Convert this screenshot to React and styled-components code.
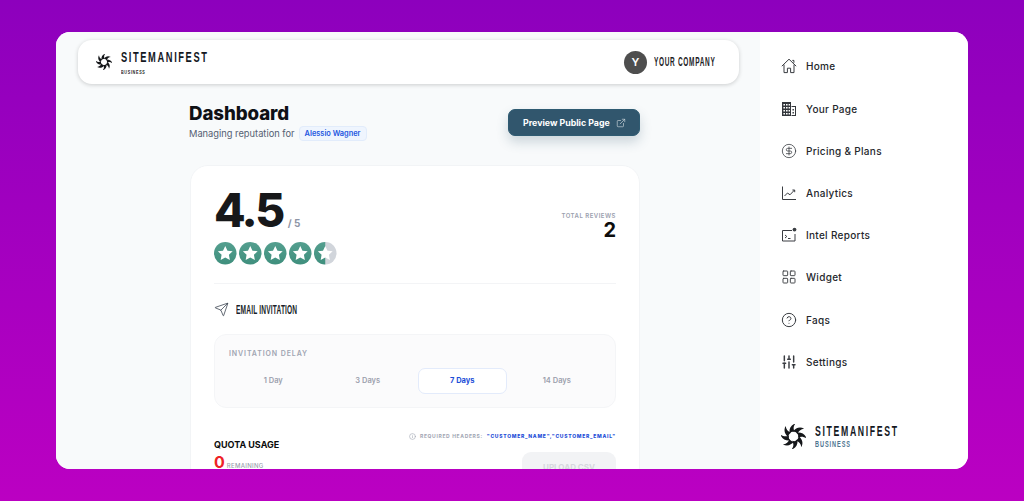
import styled, { createGlobalStyle } from 'styled-components'
import { CircleDollarSign, LayoutGrid, CircleHelp, Send, ExternalLink, SlidersVertical, Info } from 'lucide-react'

const GlobalStyle = createGlobalStyle`
    html, body { margin: 0; padding: 0; height: 100%; }
    body { font-family: Inter, "Open Sans", sans-serif; overflow: hidden; }
    #root { height: 100%; }
`

const Page = styled.div`
    height: 501px;
    padding: 32px 56px;
    box-sizing: border-box;
    background: linear-gradient(180deg, #8d00bd 0%, #bb00c2 100%);
`

const Frame = styled.div`
    display: flex;
    height: 437px;
    border-radius: 14px;
    overflow: hidden;
    background: #fff;
`

const Main = styled.div`
    width: 704px;
    flex: none;
    padding: 8px 21px 0 22px;
    box-sizing: border-box;
    background: #f8fafb;
`

const Header = styled.header`
    display: flex;
    align-items: center;
    justify-content: space-between;
    height: 44px;
    padding: 0 24px 0 18px;
    background: #fff;
    border-radius: 14px;
    box-shadow: 0 1px 4px rgba(0, 0, 0, 0.18);
`

const Brand = styled.div`
    display: flex;
    align-items: center;
    gap: ${(p) => p.$gap}px;
`

const BrandText = styled.div`
    display: flex;
    flex-direction: column;
    padding-top: ${(p) => p.$top}px;
`

// no narrow display font is installed, so the wordmarks are squeezed horizontally
const Squeezed = styled.span`
    display: block;
    width: ${(p) => p.$width}px;
    font-family: "Liberation Sans", Arial, sans-serif;
    font-weight: 700;
    white-space: nowrap;
    transform: scaleX(${(p) => p.$scale || 0.62});
    transform-origin: left center;
`

const BrandName = styled(Squeezed)`
    font-size: ${(p) => p.$size}px;
    line-height: 15px;
    letter-spacing: ${(p) => p.$spacing}px;
    color: #14181f;
`

const BrandSub = styled(Squeezed)`
    font-size: ${(p) => p.$size}px;
    line-height: 10px;
    letter-spacing: ${(p) => p.$spacing}px;
    color: ${(p) => p.$color};
    margin-top: ${(p) => p.$top}px;
`

const Company = styled.div`
    display: flex;
    align-items: center;
    gap: 7px;
`

const Avatar = styled.div`
    width: 23px;
    height: 23px;
    border-radius: 50%;
    background: #4e4e4e;
    color: #fff;
    font-size: 11px;
    font-weight: 600;
    display: flex;
    align-items: center;
    justify-content: center;
`

const CompanyName = styled(Squeezed)`
    font-size: 12.5px;
    letter-spacing: 1.3px;
    color: #1d1d1f;
`

const Content = styled.div`
    width: 450px;
    margin: 18px 0 0 112px;
`

const TitleRow = styled.div`
    display: flex;
    justify-content: space-between;
    align-items: flex-start;
    height: 63px;
`

const Title = styled.h1`
    margin: 0 0 0 -1px;
    font-size: 18.7px;
    line-height: 24px;
    font-weight: 800;
    letter-spacing: -0.1px;
    color: #0f1115;
`

const Subtitle = styled.div`
    display: flex;
    align-items: center;
    gap: 4px;
    margin-left: -1px;
    font-size: 9.3px;
    color: #556072;
`

const NameTag = styled.span`
    padding: 2px 5px;
    font-size: 7.4px;
    font-weight: 600;
    color: #2257e0;
    background: #eff5fe;
    border: 1px solid #e2ecfb;
    border-radius: 4px;
`

const PreviewButton = styled.button`
    display: flex;
    align-items: center;
    gap: 6px;
    height: 27px;
    width: 132px;
    margin-top: 7px;
    padding: 0 14px;
    box-sizing: border-box;
    border: 1px solid #2f5b72;
    border-radius: 7px;
    background: #31566d;
    color: #fff;
    font-family: inherit;
    font-size: 8.8px;
    font-weight: 700;
    white-space: nowrap;
    box-shadow: 0 6px 12px rgba(49, 86, 109, 0.22);

    svg {
        flex: none;
        opacity: 0.75;
    }
`

const Card = styled.section`
    padding: 16px 23px 0;
    height: 320px;
    background: #fff;
    border: 1px solid #f2f4f6;
    border-radius: 18px;
    box-sizing: border-box;
`

const ScoreRow = styled.div`
    display: flex;
    justify-content: space-between;
    padding-bottom: 18px;
    border-bottom: 1px solid #f3f4f6;
`

const ScoreLine = styled.div`
    display: flex;
    align-items: baseline;
    gap: 5px;
`

const Score = styled.span`
    font-size: 46px;
    line-height: 56px;
    font-weight: 800;
    letter-spacing: -2.5px;
    color: #17181a;
`

const ScoreMax = styled.span`
    font-size: 10px;
    font-weight: 700;
    color: #8e95a6;
`

const Stars = styled.div`
    display: flex;
    gap: 2.5px;
    margin-top: 4px;
`

const Totals = styled.div`
    display: flex;
    flex-direction: column;
    align-items: flex-end;
    margin-top: 30px;
`

const TotalLabel = styled.span`
    font-size: 6px;
    font-weight: 600;
    letter-spacing: 0.5px;
    color: #9aa0ae;
`

const TotalValue = styled.span`
    font-size: 20px;
    line-height: 20px;
    margin-top: 1px;
    font-weight: 700;
    color: #0d0d0d;
`

const SectionHead = styled.div`
    display: flex;
    align-items: center;
    gap: 7px;
    height: 50px;
    padding-top: 2px;
    box-sizing: border-box;
    color: #1f2937;
`

const SectionName = styled(Squeezed)`
    font-size: 12px;
    letter-spacing: 0.3px;
    color: #1a1f29;
`

const DelayBox = styled.div`
    height: 74px;
    padding: 14px 14px 0;
    box-sizing: border-box;
    background: #fbfbfc;
    border: 1px solid #f4f5f7;
    border-radius: 12px;
`

const DelayLabel = styled.div`
    font-size: 7px;
    font-weight: 600;
    letter-spacing: 0.9px;
    color: #a0a5b2;
`

const DelayGrid = styled.div`
    display: grid;
    grid-template-columns: repeat(4, 1fr);
    gap: 6px;
    margin-top: 10px;
`

const DelayOption = styled.div`
    height: 26px;
    display: flex;
    align-items: center;
    justify-content: center;
    box-sizing: border-box;
    font-size: 7.5px;
    font-weight: ${(p) => (p.$active ? 700 : 600)};
    border-radius: 7px;
    color: ${(p) => (p.$active ? '#1d4ed8' : '#9ba0ad')};
    background: ${(p) => (p.$active ? '#fff' : 'transparent')};
    border: 1px solid ${(p) => (p.$active ? '#e3ebfb' : 'transparent')};
`

const QuotaRow = styled.div`
    display: flex;
    justify-content: space-between;
    margin-top: 25px;
`

const QuotaTitle = styled.div`
    font-size: 9px;
    line-height: 12px;
    font-weight: 700;
    margin-top: 6px;
    color: #0c0c0c;
`

const QuotaLine = styled.div`
    display: flex;
    align-items: baseline;
    gap: 2px;
    margin-top: 2px;
`

const QuotaCount = styled.span`
    font-size: 16px;
    line-height: 18px;
    font-weight: 700;
    color: #ee2226;
`

const QuotaNote = styled.span`
    font-size: 6px;
    letter-spacing: 0.3px;
    color: #9aa0ae;
    font-weight: 500;
`

const QuotaRight = styled.div`
    display: flex;
    flex-direction: column;
    align-items: flex-end;
`

const HeadersLine = styled.div`
    display: flex;
    align-items: center;
    gap: 4px;
    font-size: 5px;
    font-weight: 700;
    letter-spacing: 0.65px;
    color: #a0a5b2;
    white-space: nowrap;
`

const HeadersValue = styled.span`
    color: #1d4ed8;
    font-weight: 800;
    letter-spacing: 0.72px;
`

const UploadButton = styled.button`
    width: 94px;
    height: 30px;
    margin-top: 12px;
    border: 0;
    border-radius: 9px;
    background: #f2f3f5;
    color: #d6d8dd;
    font-family: inherit;
    font-size: 8px;
    font-weight: 700;
`

const Sidebar = styled.aside`
    flex: 1;
    display: flex;
    flex-direction: column;
    padding: 13.4px 0 0 21px;
    background: #fff;
`

const Nav = styled.nav`
    display: flex;
    flex-direction: column;
`

const NavItem = styled.a`
    display: flex;
    align-items: center;
    gap: 9px;
    height: 42.2px;
    font-size: 10px;
    font-weight: 500;
    letter-spacing: 0.3px;
    color: #24272c;
`

const NavIcon = styled.span`
    width: 16px;
    height: 16px;
    display: flex;
    align-items: center;
    justify-content: center;
    color: #3a3d42;
`

const SideBrand = styled.div`
    margin-top: 41px;
`

// swirl logo, blades rotated round the centre
function SwirlLogo({ size }) {
    const blades = [0, 45, 90, 135, 180, 225, 270, 315]
    return (
        <svg width={size} height={size} viewBox="0 0 40 40">
            {blades.map((a) => (
                <path
                    key={a}
                    transform={`rotate(${a} 20 20)`}
                    fill="#15171a"
                    d="M19.5 11.5C23.5 6.5 30 3.5 37 7.5C32 8 27.5 11 26.4 16.6C25.2 14 22.8 12 19.5 11.5Z"
                />
            ))}
        </svg>
    )
}

function Star({ half, id }) {
    return (
        <svg width="22.5" height="22.5" viewBox="0 0 24 24">
            <defs>
                <linearGradient id={id} x1="0" y1="0" x2="0" y2="1">
                    <stop offset="0" stopColor="#549f8f" />
                    <stop offset="1" stopColor="#3f8f7d" />
                </linearGradient>
            </defs>
            <circle cx="12" cy="12" r="12" fill={half ? '#d1d5db' : `url(#${id})`} />
            {half && <path d="M12 0A12 12 0 0 0 12 24Z" fill={`url(#${id})`} />}
            <path
                fill="#fff"
                d="M12 4.2l2.4 5 5.5.7-4 3.8 1 5.4-4.9-2.6-4.9 2.6 1-5.4-4-3.8 5.5-.7z"
            />
        </svg>
    )
}

function HomeIcon() {
    return (
        <svg width="16" height="16" viewBox="0 0 16 16" fill="none" stroke="#3a3d42" strokeWidth="1">
            <path d="M.8 8.2L8 1.2l7.2 7" />
            <path d="M3 6.6v8h3.4v-4.4h3.2v4.4H13v-8" />
            <path d="M11.3 2.4h1.6v2.4" />
        </svg>
    )
}

function BuildingIcon() {
    return (
        <svg width="16" height="16" viewBox="0 0 16 16" fill="#33363b">
            <path d="M1 1h9v14H1zM2.4 3v1.6H4V3zm2.6 0v1.6h1.6V3zm2.6 0v1.6H9V3zM2.4 6v1.6H4V6zM5 6v1.6h1.6V6zm2.6 0v1.6H9V6zM2.4 9v1.6H4V9zM5 9v1.6h1.6V9zm2.6 0v1.6H9V9zM2.4 12v1.6H4V12zM5 12v1.6h1.6V12zm2.6 0v1.6H9V12z" fillRule="evenodd" />
            <path d="M10.5 5H15v10h-4.5v-1H14V6h-3.5z" />
            <path d="M11.5 8h1.4v1.4h-1.4zm0 3h1.4v1.4h-1.4z" />
        </svg>
    )
}

function ChartIcon() {
    return (
        <svg width="16" height="16" viewBox="0 0 16 16" fill="none" stroke="#3a3d42" strokeWidth="1">
            <path d="M1.5 1.5v13h13.5" />
            <path d="M3.5 11l3-3 2.5 1.8L13.5 5" />
            <path d="M11.4 5h2.3v2.2" />
        </svg>
    )
}

function ReportIcon() {
    return (
        <svg width="16" height="16" viewBox="0 0 16 16" fill="none" stroke="#3a3d42" strokeWidth="1">
            <path d="M11 3.5H1.5v10.5h12.5V7" />
            <path d="M4 8l1.8 1.5L4 11M7 11.5h2.5" />
            <circle cx="13.5" cy="2.6" r="1.9" fill="#3a3d42" stroke="none" />
        </svg>
    )
}

const navItems = [
    { label: 'Home', icon: <HomeIcon /> },
    { label: 'Your Page', icon: <BuildingIcon /> },
    { label: 'Pricing & Plans', icon: <CircleDollarSign size={16} strokeWidth={1.2} /> },
    { label: 'Analytics', icon: <ChartIcon /> },
    { label: 'Intel Reports', icon: <ReportIcon /> },
    { label: 'Widget', icon: <LayoutGrid size={16} strokeWidth={1.4} /> },
    { label: 'Faqs', icon: <CircleHelp size={16} strokeWidth={1.5} /> },
    { label: 'Settings', icon: <SlidersVertical size={16} strokeWidth={2.2} /> },
]

const delays = ['1 Day', '3 Days', '7 Days', '14 Days']

export default function App() {
    return (
        <Page>
            <GlobalStyle />
            <Frame>
                <Main>
                    <Header>
                        <Brand $gap={9}>
                            <SwirlLogo size={16} />
                            <BrandText $top={2}>
                                <BrandName $width={86} $size={15} $spacing={2.6}>SITEMANIFEST</BrandName>
                                <BrandSub $width={25} $size={6} $spacing={1.1} $color="#222" $top={3}>BUSINESS</BrandSub>
                            </BrandText>
                        </Brand>
                        <Company>
                            <Avatar>Y</Avatar>
                            <CompanyName $width={61} $scale={0.52}>YOUR COMPANY</CompanyName>
                        </Company>
                    </Header>
                    <Content>
                        <TitleRow>
                            <div>
                                <Title>Dashboard</Title>
                                <Subtitle>
                                    Managing reputation for
                                    <NameTag>Alessio Wagner</NameTag>
                                </Subtitle>
                            </div>
                            <PreviewButton>
                                Preview Public Page
                                <ExternalLink size={10} strokeWidth={1.6} />
                            </PreviewButton>
                        </TitleRow>
                        <Card>
                            <ScoreRow>
                                <div>
                                    <ScoreLine>
                                        <Score>4.5</Score>
                                        <ScoreMax>/ 5</ScoreMax>
                                    </ScoreLine>
                                    <Stars>
                                        {[0, 1, 2, 3, 4].map((i) => (
                                            <Star key={i} id={`star${i}`} half={i === 4} />
                                        ))}
                                    </Stars>
                                </div>
                                <Totals>
                                    <TotalLabel>TOTAL REVIEWS</TotalLabel>
                                    <TotalValue>2</TotalValue>
                                </Totals>
                            </ScoreRow>
                            <SectionHead>
                                <Send size={15} strokeWidth={1.1} />
                                <SectionName $width={61} $scale={0.55}>EMAIL INVITATION</SectionName>
                            </SectionHead>
                            <DelayBox>
                                <DelayLabel>INVITATION DELAY</DelayLabel>
                                <DelayGrid>
                                    {delays.map((d) => (
                                        <DelayOption key={d} $active={d === '7 Days'}>{d}</DelayOption>
                                    ))}
                                </DelayGrid>
                            </DelayBox>
                            <QuotaRow>
                                <div>
                                    <QuotaTitle>QUOTA USAGE</QuotaTitle>
                                    <QuotaLine>
                                        <QuotaCount>0</QuotaCount>
                                        <QuotaNote>REMAINING</QuotaNote>
                                    </QuotaLine>
                                </div>
                                <QuotaRight>
                                    <HeadersLine>
                                        <Info size={7} />
                                        REQUIRED HEADERS:
                                        <HeadersValue>"CUSTOMER_NAME","CUSTOMER_EMAIL"</HeadersValue>
                                    </HeadersLine>
                                    <UploadButton>UPLOAD CSV</UploadButton>
                                </QuotaRight>
                            </QuotaRow>
                        </Card>
                    </Content>
                </Main>
                <Sidebar>
                    <Nav>
                        {navItems.map((item) => (
                            <NavItem key={item.label}>
                                <NavIcon>{item.icon}</NavIcon>
                                {item.label}
                            </NavItem>
                        ))}
                    </Nav>
                    <SideBrand>
                        <Brand $gap={9}>
                            <SwirlLogo size={25} />
                            <BrandText $top={0}>
                                <BrandName $width={83} $size={14} $spacing={2.7}>SITEMANIFEST</BrandName>
                                <BrandSub $width={36} $size={9} $spacing={1.5} $color="#4d7590" $top={0}>BUSINESS</BrandSub>
                            </BrandText>
                        </Brand>
                    </SideBrand>
                </Sidebar>
            </Frame>
        </Page>
    )
}
